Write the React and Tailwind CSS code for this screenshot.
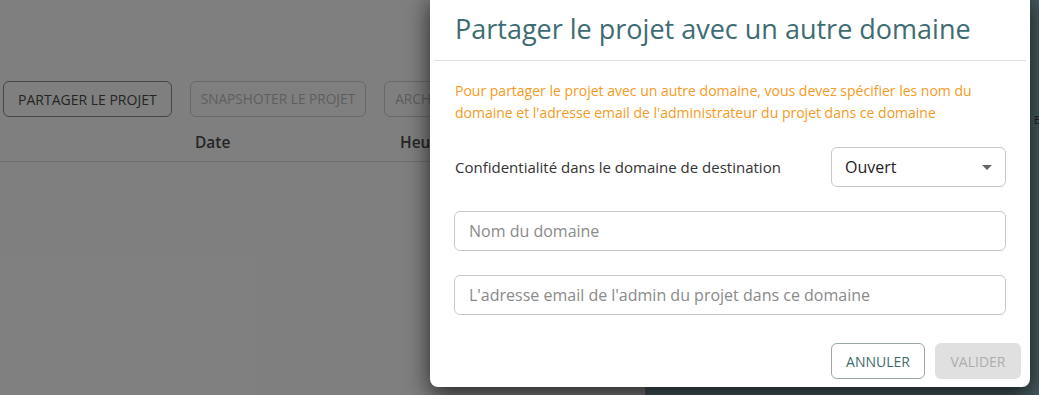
import React from "react";

const font = { fontFamily: '"Open Sans", "Noto Sans", sans-serif' };

export default function App() {
  return (
    <div className="relative w-[1039px] h-[395px] overflow-hidden bg-white" style={font}>
      {/* page behind the modal */}
      <div className="flex h-full">
        <div className="w-[645px] flex flex-col">
          <div className="flex items-center gap-[18px] pl-[3px] pt-[81px]">
            <button className="h-9 px-[14px] rounded-md border border-[#8a8a8a] text-[14px] text-[#4a4a4a]">
              PARTAGER LE PROJET
            </button>
            <button className="h-9 px-[10px] rounded-md border border-[#d0d0d0] text-[13.7px] text-[#bdbdbd]">
              SNAPSHOTER LE PROJET
            </button>
            <button className="h-9 px-[10px] rounded-md border border-[#d0d0d0] text-[13.7px] text-[#bdbdbd] whitespace-nowrap">
              ARCHIVER LE PROJET
            </button>
          </div>
          <div className="flex items-end pb-[7px] h-[45px] border-b border-[#dcdcdc] text-[15.5px] font-semibold text-[#4a4a4a]">
            <span className="pl-[195px] w-[400px]">Date</span>
            <span>Heure</span>
          </div>
        </div>
        <div className="flex-1 bg-[#8db5bd] relative">
          <span className="absolute left-[389px] top-[112px] text-[11px] text-[#333]">E</span>
        </div>
      </div>

      {/* overlay */}
      <div className="absolute inset-0 bg-black/50" />

      {/* dialog */}
      <div className="absolute left-[430px] top-[-8px] w-[600px] h-[395px] bg-white rounded-lg shadow-[0_8px_24px_rgba(0,0,0,0.7)] flex flex-col">
        <div className="px-[25px] pt-[21px] pb-[15px]">
          <h2 className="text-[27px] leading-8 text-[#3e6c73]">Partager le projet avec un autre domaine</h2>
        </div>
        <div className="mx-1 h-px bg-[#dedede]" />
        <div className="px-[24px] pt-[19px] flex flex-col">
          <p className="text-[14px] leading-[22px] text-[#f59a23] pl-px">
            Pour partager le projet avec un autre domaine, vous devez spécifier les nom du domaine et l'adresse email de l'administrateur du projet dans ce domaine
          </p>
          <div className="flex items-center justify-between mt-[23px]">
            <span className="text-[15px] text-[#333] pl-px">Confidentialité dans le domaine de destination</span>
            <div className="w-[175px] h-10 rounded-md border border-[#c8c8c8] flex items-center justify-between pl-[13px] pr-[13px]">
              <span className="text-[16px] text-[#222]">Ouvert</span>
              <svg width="10" height="5" viewBox="0 0 10 5"><path d="M0 0h10L5 5z" fill="#666" /></svg>
            </div>
          </div>
          <div className="mt-6 h-10 rounded-md border border-[#c8c8c8] flex items-center px-[14px] text-[16px] text-[#8a8a8a]">
            Nom du domaine
          </div>
          <div className="mt-6 h-10 rounded-md border border-[#c8c8c8] flex items-center px-[14px] text-[16px] text-[#8a8a8a]">
            L'adresse email de l'admin du projet dans ce domaine
          </div>
        </div>
        <div className="flex justify-end gap-[10px] pr-[9px] mt-[28px]">
          <button className="h-9 w-[94px] rounded-md border border-[#9aa7a7] text-[14px] text-[#3e6c6c]">ANNULER</button>
          <button className="h-9 w-[86px] rounded-md bg-[#e0e0e0] text-[14px] text-[#adadad]">VALIDER</button>
        </div>
      </div>
    </div>
  );
}
